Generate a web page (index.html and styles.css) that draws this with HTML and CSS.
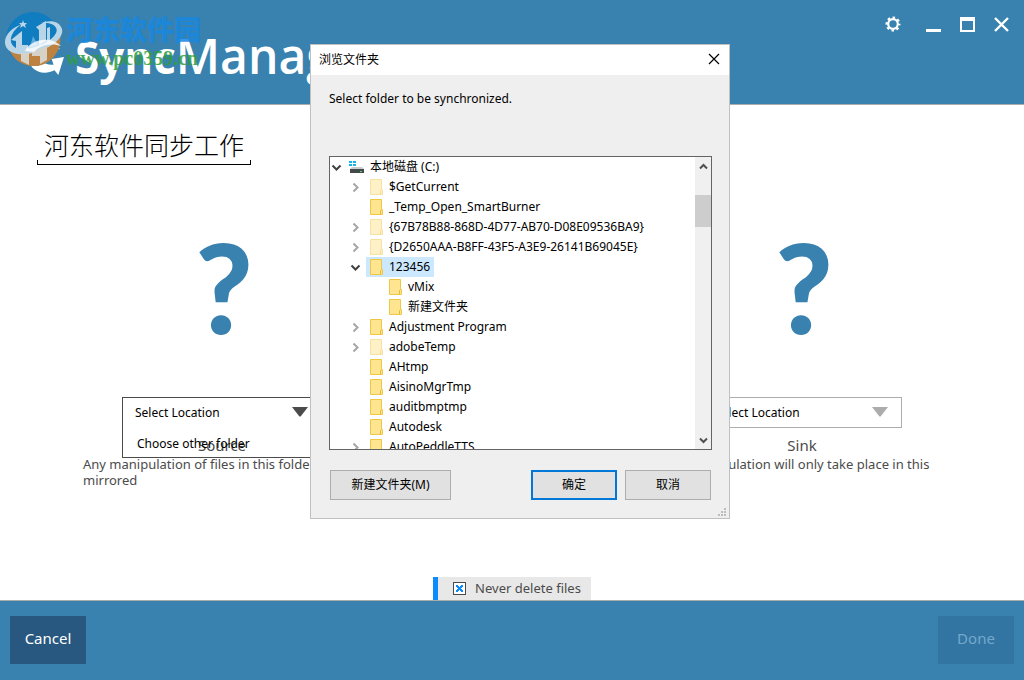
FILE: index.html
```html
<!DOCTYPE html>
<html lang="en">
  <head>
    <meta charset="UTF-8" />
    <meta name="viewport" content="width=device-width, initial-scale=1.0" />
    <title>SyncManager</title>
    <link rel="stylesheet" href="styles.css">
  </head>
  <body>
    <!-- Shared icons -->
    <svg class="sprite" aria-hidden="true">
      <symbol id="folder" viewBox="0 0 14 16">
        <path d="M0.5 0.5H11.5V10.5H12.5V15.5H0.5Z" fill="#ffe590" stroke="#ecc748" />
        <path d="M10.5 15V11.5L11.5 10.5" fill="none" stroke="#e6b93a" />
      </symbol>
      <symbol id="chevron-right" viewBox="0 0 13 13">
        <path d="M4.5 2.5L8.5 6.5L4.5 10.5" fill="none" stroke="#a6a6a6" stroke-width="2" />
      </symbol>
      <symbol id="chevron-down" viewBox="0 0 13 13">
        <path d="M2.5 4.5L6.5 8.5L10.5 4.5" fill="none" stroke="#404040" stroke-width="2" />
      </symbol>
    </svg>

    <header>
      <div class="brand">
        <svg class="brand-logo" viewBox="0 0 44 40" aria-hidden="true">
          <path d="M3 14C7 4 29 -1 38 11C31 7 20 8 16 14C13 20 19 28 31 27L29 21L42 19L36 38L32 33C20 39 4 35 3 14Z" fill="#fff" />
        </svg>
        <h1><b>Sync</b>Manager</h1>
      </div>
      <div class="window-buttons">
        <button class="settings" aria-label="Settings">
          <svg viewBox="0 0 16 16" width="16" height="16">
            <circle cx="8" cy="8" r="4.8" fill="none" stroke="#fff" stroke-width="2.2" />
            <circle cx="8" cy="8" r="6.4" fill="none" stroke="#fff" stroke-width="2.2" stroke-dasharray="2.5 2.527" stroke-dashoffset="1.25" />
          </svg>
        </button>
        <button aria-label="Minimize">
          <svg viewBox="0 0 15 15" width="15" height="15"><path d="M0 12H15V15H0Z" fill="#fff" /></svg>
        </button>
        <button aria-label="Maximize">
          <svg viewBox="0 0 15 15" width="15" height="15"><path d="M0 0H15V15H0ZM2 4V13H13V4Z" fill="#fff" fill-rule="evenodd" /></svg>
        </button>
        <button aria-label="Close">
          <svg viewBox="0 0 15 15" width="15" height="15"><path d="M1 1L14 14M14 1L1 14" stroke="#fff" stroke-width="2.4" /></svg>
        </button>
      </div>

      <div class="watermark">
        <svg viewBox="0 0 58 58" width="58" height="58" aria-hidden="true">
          <circle cx="28" cy="29" r="27" fill="#0f7dc0" />
          <path d="M3 36C16 46 44 40 55 24C58 44 42 57 28 56C16 56 6 48 3 36Z" fill="#bd8240" />
          <path d="M17 14C-5 22 -5 42 13 44C34 46 60 31 57 19C54 10 44 10 36 13C47 12 54 17 51 23C46 33 26 40 15 39C2 37 3 23 17 14Z" fill="#b9d5e8" />
          <path d="M6 30L17 21V35H23V40H11V31ZM31 17L41 11V31L34 35V20ZM45 17V30L42 32V18Z" fill="#b9d5e8" />
          <path d="M16 43H24V55L16 51ZM35 39L42 36V50L35 54V46H27V42Z" fill="#d6d2c8" />
          <path d="M28 26L33 35L25 37Z" fill="#5da9d9" />
          <path d="M18 10L19 13L22 13L20 15L21 18L18 16L15 18L16 15L14 13L17 13Z" fill="#b9d5e8" />
          <path d="M20 41C25 30 45 25 56 36C45 32 34 36 29 42Z" fill="#fff" opacity="0.8" />
        </svg>
        <div class="watermark-text">
          <span class="site-name">河东软件园</span>
          <span class="site-url">www.pc0359.cn</span>
        </div>
      </div>
    </header>

    <main>
      <div class="job-name">
        <input type="text" aria-label="Job name" value="河东软件同步工作" />
      </div>

      <div class="locations">
        <section class="location active">
          <div class="unknown">?</div>
          <div class="picker">
            <select id="source">
              <option>Select Location</option>
            </select>
            <svg class="arrow" viewBox="0 0 16 10" width="16" height="10" aria-hidden="true"><path d="M0 0H16L9 9Q8 10 7 9Z" fill="currentColor" /></svg>
            <div class="picker-list">
              <button>Choose other folder</button>
            </div>
          </div>
          <label for="source">Source</label>
          <p>Any manipulation of files in this folder will be mirrored</p>
        </section>

        <section class="location">
          <div class="unknown">?</div>
          <div class="picker">
            <select id="sink">
              <option>Select Location</option>
            </select>
            <svg class="arrow" viewBox="0 0 16 10" width="16" height="10" aria-hidden="true"><path d="M0 0H16L9 9Q8 10 7 9Z" fill="currentColor" /></svg>
          </div>
          <label for="sink">Sink</label>
          <p>Any manipulation will only take place in this folder</p>
        </section>
      </div>

      <label class="never-delete">
        <input type="checkbox" checked />
        Never delete files
      </label>
    </main>

    <footer>
      <button class="action">Cancel</button>
      <button class="action" disabled>Done</button>
    </footer>

    <!-- Browse for folder -->
    <div class="dialog" role="dialog" aria-labelledby="dialog-title">
      <div class="dialog-title">
        <h2 id="dialog-title">浏览文件夹</h2>
        <button aria-label="Close dialog">
          <svg viewBox="0 0 12 12" width="12" height="12"><path d="M1 1L11 11M11 1L1 11" stroke="#000" stroke-width="1.2" /></svg>
        </button>
      </div>
      <div class="dialog-body">
        <p>Select folder to be synchronized.</p>

        <div class="tree-box">
          <ul class="tree">
            <li>
              <div class="row">
                <button class="toggle" aria-label="Collapse"><svg><use href="#chevron-down" /></svg></button>
                <span class="item drive">
                  <svg viewBox="0 0 16 14" width="16" height="14" aria-hidden="true">
                    <path d="M0 1H3V3H0ZM4 1H7V3H4ZM0 4H3V6H0ZM4 4H7V6H4Z" fill="#11b5e9" />
                    <path d="M3 7H13L15 9H1Z" fill="#c9cccd" />
                    <path d="M1 9H15V13H1Z" fill="#44494c" />
                    <path d="M11 11H13V12H11Z" fill="#53dd5c" />
                  </svg>
                  本地磁盘 (C:)
                </span>
              </div>
              <ul>
                <li>
                  <div class="row">
                    <button class="toggle" aria-label="Expand"><svg><use href="#chevron-right" /></svg></button>
                    <span class="item faded"><svg><use href="#folder" /></svg>$GetCurrent</span>
                  </div>
                </li>
                <li>
                  <div class="row">
                    <span class="toggle"></span>
                    <span class="item"><svg><use href="#folder" /></svg>_Temp_Open_SmartBurner</span>
                  </div>
                </li>
                <li>
                  <div class="row">
                    <button class="toggle" aria-label="Expand"><svg><use href="#chevron-right" /></svg></button>
                    <span class="item faded"><svg><use href="#folder" /></svg>{67B78B88-868D-4D77-AB70-D08E09536BA9}</span>
                  </div>
                </li>
                <li>
                  <div class="row">
                    <button class="toggle" aria-label="Expand"><svg><use href="#chevron-right" /></svg></button>
                    <span class="item faded"><svg><use href="#folder" /></svg>{D2650AAA-B8FF-43F5-A3E9-26141B69045E}</span>
                  </div>
                </li>
                <li>
                  <div class="row">
                    <button class="toggle" aria-label="Collapse"><svg><use href="#chevron-down" /></svg></button>
                    <span class="item selected"><svg><use href="#folder" /></svg>123456</span>
                  </div>
                  <ul>
                    <li>
                      <div class="row">
                        <span class="toggle"></span>
                        <span class="item"><svg><use href="#folder" /></svg>vMix</span>
                      </div>
                    </li>
                    <li>
                      <div class="row">
                        <span class="toggle"></span>
                        <span class="item"><svg><use href="#folder" /></svg>新建文件夹</span>
                      </div>
                    </li>
                  </ul>
                </li>
                <li>
                  <div class="row">
                    <button class="toggle" aria-label="Expand"><svg><use href="#chevron-right" /></svg></button>
                    <span class="item"><svg><use href="#folder" /></svg>Adjustment Program</span>
                  </div>
                </li>
                <li>
                  <div class="row">
                    <button class="toggle" aria-label="Expand"><svg><use href="#chevron-right" /></svg></button>
                    <span class="item faded"><svg><use href="#folder" /></svg>adobeTemp</span>
                  </div>
                </li>
                <li>
                  <div class="row">
                    <span class="toggle"></span>
                    <span class="item"><svg><use href="#folder" /></svg>AHtmp</span>
                  </div>
                </li>
                <li>
                  <div class="row">
                    <span class="toggle"></span>
                    <span class="item"><svg><use href="#folder" /></svg>AisinoMgrTmp</span>
                  </div>
                </li>
                <li>
                  <div class="row">
                    <span class="toggle"></span>
                    <span class="item"><svg><use href="#folder" /></svg>auditbmptmp</span>
                  </div>
                </li>
                <li>
                  <div class="row">
                    <span class="toggle"></span>
                    <span class="item"><svg><use href="#folder" /></svg>Autodesk</span>
                  </div>
                </li>
                <li>
                  <div class="row">
                    <button class="toggle" aria-label="Expand"><svg><use href="#chevron-right" /></svg></button>
                    <span class="item"><svg><use href="#folder" /></svg>AutoPeddleTTS</span>
                  </div>
                </li>
              </ul>
            </li>
          </ul>
          <div class="scrollbar">
            <button aria-label="Scroll up">
              <svg viewBox="0 0 9 7" width="9" height="7"><path d="M1 5.5L4.5 2L8 5.5" fill="none" stroke="#505050" stroke-width="2" /></svg>
            </button>
            <div class="track"><div class="thumb"></div></div>
            <button aria-label="Scroll down">
              <svg viewBox="0 0 9 7" width="9" height="7"><path d="M1 1.5L4.5 5L8 1.5" fill="none" stroke="#505050" stroke-width="2" /></svg>
            </button>
          </div>
        </div>

        <div class="dialog-buttons">
          <button class="new-folder">新建文件夹(M)</button>
          <button class="default">确定</button>
          <button>取消</button>
        </div>
      </div>
      <svg class="grip" viewBox="0 0 8 8" width="8" height="8" aria-hidden="true">
        <path d="M6 0H8V2H6ZM3 3H5V5H3ZM6 3H8V5H6ZM0 6H2V8H0ZM3 6H5V8H3ZM6 6H8V8H6Z" fill="#bdbdbd" />
      </svg>
    </div>
  </body>
</html>
```
FILE: styles.css
```css
/* CSS Styling */
* {
  margin: 0;
  padding: 0;
  box-sizing: border-box;
}

body {
  position: relative;
  display: flex;
  flex-direction: column;
  min-height: 100vh;
  background-color: #fff;
  color: #000;
  font-family: "Noto Sans", "Noto Sans CJK SC", sans-serif;
  font-size: 12px;
}

button,
input,
select {
  font-family: inherit;
  font-size: inherit;
  color: inherit;
}

button {
  border: none;
  background: none;
  cursor: pointer;
}

svg {
  display: block;
}

.sprite {
  position: absolute;
  width: 0;
  height: 0;
}

/* Header */
header {
  position: relative;
  display: flex;
  justify-content: space-between;
  align-items: flex-start;
  height: 105px;
  padding: 16px 15px 0 24px;
  background-color: #3982b0;
  border-bottom: 1px solid #acacac;
}

.brand {
  display: flex;
  align-items: center;
  gap: 9px;
  color: #fff;
  padding-top: 8px;
}

.brand-logo {
  width: 42px;
  height: 38px;
  margin-top: 2px;
}

.brand h1 {
  font-family: "Open Sans", sans-serif;
  font-size: 48px;
  line-height: 64px;
  font-weight: 600;
}

.brand b {
  font-size: 44px;
  font-weight: 700;
}

.window-buttons {
  display: flex;
  gap: 19px;
}

.window-buttons .settings {
  margin-right: 6px;
}

/* Site mark over the title */
.watermark {
  position: absolute;
  top: 10px;
  left: 5px;
  display: flex;
  gap: 3px;
}

.watermark-text {
  display: flex;
  flex-direction: column;
}

.site-name {
  color: #1787df;
  font-family: "Noto Sans CJK SC", sans-serif;
  font-size: 27px;
  font-weight: 900;
  line-height: 37px;
  opacity: 0.85;
}

.site-url {
  color: #2f9e3f;
  font-family: "Liberation Serif", serif;
  font-size: 20px;
  font-weight: bold;
  line-height: 22px;
  opacity: 0.85;
}

/* Main */
main {
  flex: 1;
  display: flex;
  flex-direction: column;
  align-items: center;
  color: #4b4b4b;
}

.job-name {
  align-self: flex-start;
  margin: 21px 0 0 37px;
  padding-bottom: 4px;
  /* Short ticks at both ends of the underline */
  background:
    linear-gradient(#000, #000) left bottom / 1px 5px no-repeat,
    linear-gradient(#000, #000) right bottom / 1px 5px no-repeat,
    linear-gradient(#000, #000) left bottom / 100% 1px no-repeat;
}

.job-name input {
  display: block;
  width: 214px;
  height: 35px;
  padding: 0 7px;
  border: none;
  background: none;
  color: #000;
  font-family: "Noto Sans CJK SC", sans-serif;
  font-size: 25px;
  font-weight: 300;
}

.locations {
  display: flex;
  justify-content: space-between;
  width: 100%;
  padding: 56px 82px 0;
}

.location {
  display: flex;
  flex-direction: column;
  align-items: center;
  width: 280px;
}

.unknown {
  color: #3982b0;
  font-family: "Lato", sans-serif;
  font-size: 124px;
  font-weight: 900;
  line-height: 130px;
  margin-bottom: 46px;
  padding-left: 4px;
}

.picker {
  position: relative;
  width: 200px;
  border: 1px solid #acacac;
  color: #acacac;
}

.active .picker {
  border-color: #4b4b4b;
  border-bottom-color: transparent;
  color: #4b4b4b;
}

.picker select {
  display: block;
  width: 100%;
  height: 29px;
  padding: 0 12px;
  appearance: none;
  border: none;
  background: none;
  color: #000;
}

.arrow {
  position: absolute;
  top: 9px;
  right: 13px;
}

.picker-list {
  position: absolute;
  top: 29px;
  left: -1px;
  right: -1px;
  border: 1px solid #4b4b4b;
  border-top: none;
}

.picker-list button {
  display: block;
  width: 100%;
  height: 30px;
  padding: 2px 0 0 14px;
  text-align: left;
  color: #000;
}

.location label {
  font-size: 15px;
  line-height: 20px;
  margin-top: 7px;
}

.location p {
  width: 100%;
  font-size: 13px;
  line-height: 16px;
  padding: 1px 0 0 1px;
}

.never-delete {
  display: flex;
  align-items: center;
  gap: 9px;
  margin-top: auto;
  padding: 0 10px 0 15px;
  border-left: 5px solid #0a8cff;
  background-color: #e8e8e8;
  font-size: 13px;
  line-height: 23px;
}

.never-delete input {
  appearance: none;
  width: 13px;
  height: 13px;
  border: 1px solid #4b4b4b;
  background:
    linear-gradient(45deg, transparent 38%, #0a8cff 38%, #0a8cff 62%, transparent 62%) center / 7px 7px no-repeat,
    linear-gradient(-45deg, transparent 38%, #0a8cff 38%, #0a8cff 62%, transparent 62%) center / 7px 7px no-repeat,
    #fff;
}

/* Footer */
footer {
  display: flex;
  justify-content: space-between;
  height: 80px;
  padding: 15px 10px;
  background-color: #3982b0;
  border-top: 1px solid #acacac;
}

.action {
  width: 76px;
  height: 48px;
  padding-bottom: 4px;
  background-color: #28587f;
  color: #fff;
  font-size: 15px;
}

.action:disabled {
  background-color: #3274a2;
  color: #74a8cb;
}

/* Browse dialog */
.dialog {
  position: absolute;
  top: 44px;
  left: calc(50% - 202px);
  width: 420px;
  border: 1px solid #c0c0c0;
  background-color: #efefef;
}

.dialog-title {
  display: flex;
  justify-content: space-between;
  align-items: center;
  height: 30px;
  padding: 0 9px 0 8px;
  background-color: #fff;
}

.dialog-title h2 {
  font-size: 12px;
  font-weight: 400;
  padding-bottom: 2px;
}

.dialog-title button {
  padding-bottom: 2px;
}

.dialog-body {
  padding: 15px 17px 18px 18px;
}

.dialog-body p {
  height: 66px;
  line-height: 18px;
}

.tree-box {
  display: flex;
  height: 294px;
  border: 1px solid #646464;
  background-color: #fff;
}

.tree {
  flex: 1;
  overflow: hidden;
}

.tree,
.tree ul {
  list-style: none;
}

.tree ul {
  padding-left: 19px;
}

.row {
  display: flex;
  align-items: center;
  gap: 4px;
  height: 20px;
}

.toggle,
.toggle svg {
  width: 13px;
  height: 13px;
}

.item {
  display: flex;
  align-items: center;
  gap: 5px;
  height: 20px;
  padding: 0 4px;
  line-height: 18px;
  white-space: nowrap;
}

.item svg {
  width: 14px;
  height: 16px;
}

.item.drive {
  padding-left: 2px;
}

.drive svg {
  width: 16px;
}

.faded svg {
  opacity: 0.5;
}

.selected {
  background-color: #cce8ff;
}

.scrollbar {
  display: flex;
  flex-direction: column;
  width: 16px;
  background-color: #f0f0f0;
}

.scrollbar button {
  display: flex;
  align-items: center;
  justify-content: center;
  height: 18px;
}

.track {
  flex: 1;
  padding-top: 20px;
}

.thumb {
  height: 32px;
  background-color: #cdcdcd;
}

.dialog-buttons {
  display: flex;
  gap: 8px;
  margin: 20px 1px 0;
}

.dialog-buttons button {
  width: 86px;
  height: 30px;
  padding-bottom: 2px;
  border: 1px solid #adadad;
  background-color: #e1e1e1;
}

.dialog-buttons .new-folder {
  width: 121px;
  margin-right: auto;
}

.dialog-buttons .default {
  border: 2px solid #0078d7;
}

.grip {
  position: absolute;
  right: 3px;
  bottom: 2px;
}
```
